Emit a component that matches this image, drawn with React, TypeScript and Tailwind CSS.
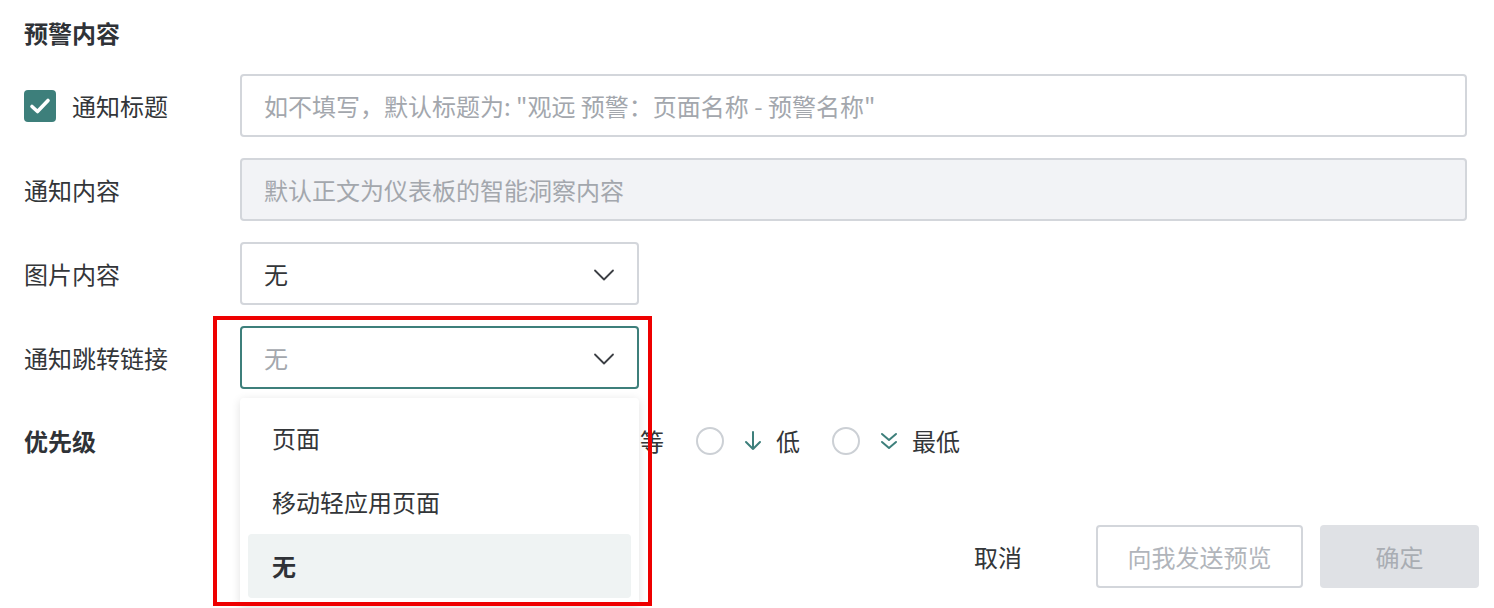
import React from "react";

const font = "font-['Noto_Sans_CJK_SC','Noto_Sans',sans-serif]";

function Chevron() {
  return (
    <svg width="22" height="14" viewBox="0 0 22 14" fill="none" className="mt-[3px] shrink-0">
      <path d="M2 2.5 L11 11.5 L20 2.5" stroke="#3c3f44" strokeWidth="1.8" strokeLinecap="round" strokeLinejoin="round" />
    </svg>
  );
}

function Select({ value, active, muted }: { value: string; active?: boolean; muted?: boolean }) {
  return (
    <div
      className={`flex h-[63px] w-[399px] items-center justify-between rounded-[4px] border-2 bg-white pl-[22px] pr-[22px] ${
        active ? "border-[#3d7f7b]" : "border-[#d3d6db]"
      }`}
    >
      <span className={muted ? "text-[#a3a7ad]" : "text-[#333639]"}>{value}</span>
      <Chevron />
    </div>
  );
}

function Label({ children, bold }: { children: React.ReactNode; bold?: boolean }) {
  return (
    <div className={`w-[216px] shrink-0 ${bold ? "font-bold text-[#2f3237]" : "text-[#333639]"}`}>{children}</div>
  );
}

function ArrowIcon({ kind }: { kind: string }) {
  const c = "#3d7f7b";
  if (kind === "down")
    return (
      <svg width="20" height="24" viewBox="0 0 20 24" fill="none">
        <path d="M10 3 V20 M3 13 L10 20 L17 13" stroke={c} strokeWidth="2" strokeLinecap="round" strokeLinejoin="round" />
      </svg>
    );
  if (kind === "ddown")
    return (
      <svg width="20" height="24" viewBox="0 0 20 24" fill="none">
        <path d="M3 5 L10 11 L17 5 M3 13 L10 19 L17 13" stroke={c} strokeWidth="2" strokeLinecap="round" strokeLinejoin="round" />
      </svg>
    );
  if (kind === "up")
    return (
      <svg width="20" height="24" viewBox="0 0 20 24" fill="none">
        <path d="M10 21 V4 M3 11 L10 4 L17 11" stroke={c} strokeWidth="2" strokeLinecap="round" strokeLinejoin="round" />
      </svg>
    );
  if (kind === "dup")
    return (
      <svg width="20" height="24" viewBox="0 0 20 24" fill="none">
        <path d="M3 11 L10 5 L17 11 M3 19 L10 13 L17 19" stroke={c} strokeWidth="2" strokeLinecap="round" strokeLinejoin="round" />
      </svg>
    );
  return (
    <svg width="20" height="24" viewBox="0 0 20 24" fill="none">
      <path d="M3 9 H17 M3 15 H17" stroke={c} strokeWidth="2" strokeLinecap="round" />
    </svg>
  );
}

const priorities = [
  { icon: "dup", text: "最高" },
  { icon: "up", text: "高" },
  { icon: "mid", text: "中等" },
  { icon: "down", text: "低" },
  { icon: "ddown", text: "最低" },
];

export default function App() {
  return (
    <div className={`relative h-[608px] w-[1494px] overflow-hidden bg-white text-[24px] leading-none ${font}`}>
      <div className="pl-6 pr-[27px]">
        <div className="flex h-[70px] items-center pb-1 font-bold text-[#2f3237]">预警内容</div>

        <div className="mt-1 flex flex-col gap-[21px]">
          <div className="flex items-center">
            <div className="flex w-[216px] shrink-0 items-center gap-4 text-[#333639]">
              <span className="flex h-8 w-8 items-center justify-center rounded-[4px] bg-[#3d7f7b]">
                <svg width="22" height="18" viewBox="0 0 22 18" fill="none">
                  <path d="M3 9.5 L8.5 14.5 L19 3.5" stroke="white" strokeWidth="3.6" strokeLinecap="round" strokeLinejoin="round" />
                </svg>
              </span>
              通知标题
            </div>
            <div className="flex h-[63px] flex-1 items-center rounded-[4px] border-2 border-[#d3d6db] bg-white px-[22px] text-[#a3a7ad]">
              如不填写，默认标题为: "观远 预警：页面名称 - 预警名称"
            </div>
          </div>

          <div className="flex items-center">
            <Label>通知内容</Label>
            <div className="flex h-[63px] flex-1 items-center rounded-[4px] border-2 border-[#d3d6db] bg-[#f2f3f6] px-[22px] text-[#a3a7ad]">
              默认正文为仪表板的智能洞察内容
            </div>
          </div>

          <div className="flex items-center">
            <Label>图片内容</Label>
            <Select value="无" />
          </div>

          <div className="flex items-center">
            <Label>通知跳转链接</Label>
            <Select value="无" active muted />
          </div>
        </div>

        <div className="flex h-[104px] items-center">
          <Label bold>优先级</Label>
          <div className="flex items-center gap-8 text-[#333639]">
            {priorities.map((p) => (
              <div key={p.text} className="flex items-center">
                <span className="h-7 w-7 rounded-full border-2 border-[#ccd0d5] bg-white" />
                <span className="ml-[19px] flex">
                  <ArrowIcon kind={p.icon} />
                </span>
                <span className="ml-[13px]">{p.text}</span>
              </div>
            ))}
          </div>
        </div>
      </div>

      <div className="mt-[32px] flex justify-end pr-[15px]">
        <button className="mr-[50px] flex h-[63px] items-center px-6 text-[#333639]">取消</button>
        <button className="flex h-[63px] w-[207px] items-center justify-center rounded-[4px] border-2 border-[#d3d6db] bg-white text-[#b1b5bb]">
          向我发送预览
        </button>
        <button className="ml-[17px] flex h-[63px] w-[159px] items-center justify-center rounded-[4px] bg-[#dfe1e5] text-[#a9adb3]">
          确定
        </button>
      </div>

      {/* dropdown menu */}
      <div className="absolute left-[240px] top-[398px] w-[399px] rounded-[4px] bg-white p-2 shadow-[0_2px_10px_rgba(0,0,0,0.12)]">
        <div className="flex h-16 items-center rounded-[4px] pl-6 text-[#333639]">页面</div>
        <div className="flex h-16 items-center rounded-[4px] pl-6 text-[#333639]">移动轻应用页面</div>
        <div className="flex h-16 items-center rounded-[4px] bg-[#eff3f3] pl-6 font-bold text-[#2f3237]">无</div>
      </div>

      {/* annotation */}
      <div className="pointer-events-none absolute left-[213px] top-[316px] h-[290px] w-[439px] border-4 border-[#ee0000]" />
    </div>
  );
}
